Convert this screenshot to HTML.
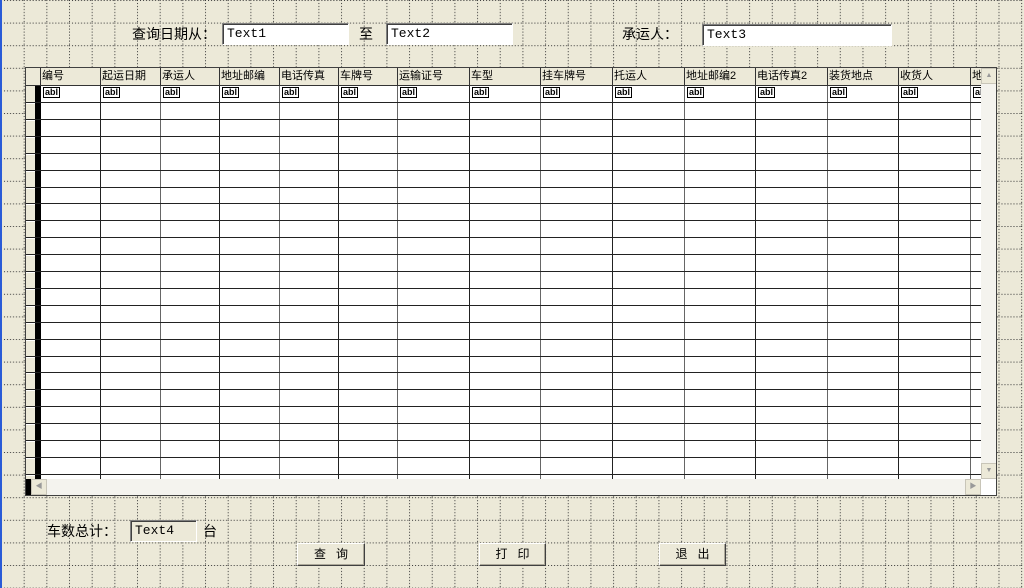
<!DOCTYPE html>
<html><head><meta charset="utf-8"><style>
*{margin:0;padding:0;box-sizing:border-box}
body{width:1024px;height:588px;overflow:hidden;background:#ECE9D8;position:relative;font-family:"Liberation Sans","Noto Sans CJK SC","WenQuanYi Zen Hei",sans-serif}
#bg{position:absolute;left:0;top:0}
.blue{position:absolute;left:0;top:0;width:2px;height:588px;background:#2a5bd7}
.lbl{position:absolute;font-size:14px;color:#000;white-space:nowrap}
.tb{position:absolute;background:#fff;border-top:1px solid #808080;border-left:1px solid #808080;border-right:1px solid #fff;border-bottom:1px solid #fff;box-shadow:inset 1px 1px 0 #404040;font-family:"Liberation Mono",monospace;font-size:13px;padding:2px 0 0 4px;color:#000}
.btn{position:absolute;background:#ECE9D8;border:1px solid;border-color:#fff #404040 #404040 #fff;box-shadow:inset -1px -1px 0 #aca899;font-size:12px;text-align:center;line-height:20px;letter-spacing:10px;padding-left:10px}
#grid{position:absolute;left:25px;top:67px;width:972px;height:429px;background:#ECE9D8;border:1px solid #404040;overflow:hidden}
.hd{position:absolute;top:0;height:18px;font-size:11px;line-height:16px;padding-left:1px;border-right:1px solid #333;border-bottom:1px solid #333;background:#ECE9D8;white-space:nowrap;overflow:hidden}
.cell{position:absolute;background:#fff}
.ab{position:absolute;font-size:9px;font-weight:bold;line-height:9px;height:11px;border:1px solid #000;padding:0 1px;background:#fff;font-family:"Liberation Sans",sans-serif}
</style></head><body>
<svg id="bg" width="1024" height="588"><defs><pattern id="p" width="22.67" height="22.6" patternUnits="userSpaceOnUse" x="1" y="0"><g fill="#333"><rect x="0" y="0" width="1" height="1"/><rect x="3" y="0" width="1" height="1"/><rect x="6" y="0" width="1" height="1"/><rect x="9" y="0" width="1" height="1"/><rect x="12" y="0" width="1" height="1"/><rect x="15" y="0" width="1" height="1"/><rect x="18" y="0" width="1" height="1"/><rect x="21" y="0" width="1" height="1"/><rect x="0" y="3" width="1" height="1"/><rect x="0" y="6" width="1" height="1"/><rect x="0" y="9" width="1" height="1"/><rect x="0" y="12" width="1" height="1"/><rect x="0" y="15" width="1" height="1"/><rect x="0" y="18" width="1" height="1"/><rect x="0" y="21" width="1" height="1"/></g></pattern></defs><rect width="1024" height="588" fill="url(#p)"/></svg>
<div class="blue"></div>
<div class="lbl" style="left:132px;top:24px">查询日期从：</div>
<div class="tb" style="left:222px;top:23px;width:127px;height:22px">Text1</div>
<div class="lbl" style="left:359px;top:24px">至</div>
<div class="tb" style="left:386px;top:23px;width:127px;height:22px">Text2</div>
<div class="lbl" style="left:622px;top:24px">承运人：</div>
<div class="tb" style="left:702px;top:24px;width:190px;height:22px">Text3</div>
<div id="grid"></div>
<div class="lbl" style="left:47px;top:521px">车数总计：</div>
<div class="tb" style="left:130px;top:520px;width:67px;height:22px;background:#ECE9D8">Text4</div>
<div class="lbl" style="left:203px;top:521px">台</div>
<div class="btn" style="left:297px;top:543px;width:68px;height:23px">查询</div>
<div class="btn" style="left:479px;top:543px;width:67px;height:23px">打印</div>
<div class="btn" style="left:659px;top:543px;width:67px;height:23px">退出</div>
<script>
var g=document.getElementById('grid');
var cols=[15,75,135,194,254,313,372,444,515,587,659,730,802,873,945,990];
var names=['编号','起运日期','承运人','地址邮编','电话传真','车牌号','运输证号','车型','挂车牌号','托运人','地址邮编2','电话传真2','装货地点','收货人','地'];
var h='';
// white cell area
h+='<div class="cell" style="left:15px;top:18px;width:940px;height:393px"></div>';
// row selector column
h+='<div style="position:absolute;left:0;top:0;width:15px;height:18px;border-right:1px solid #333;border-bottom:1px solid #333;background:#ECE9D8"></div>';
h+='<div style="position:absolute;left:9px;top:18px;width:6px;height:393px;background:#000"></div>';
for(var i=0;i<names.length;i++){var w=cols[i+1]-cols[i];h+='<div class="hd" style="left:'+cols[i]+'px;width:'+w+'px">'+names[i]+'</div>';h+='<div class="ab" style="left:'+(cols[i]+2)+'px;top:19px">abl</div>';}
// vertical lines
for(var i=1;i<cols.length-1;i++){h+='<div style="position:absolute;left:'+(cols[i]-1)+'px;top:18px;width:1px;height:393px;background:'+(i%2?'#222':'#666')+'"></div>';}
// horizontal lines
for(var y=34;y<411;y+=16.9){h+='<div style="position:absolute;left:0;top:'+Math.round(y)+'px;width:955px;height:1px;background:#222"></div>';h+='<div style="position:absolute;left:0;top:'+(Math.round(y)+1)+'px;width:9px;height:1px;background:#fff"></div>';}
// vertical scrollbar
h+='<div style="position:absolute;left:955px;top:0;width:16px;height:411px;background:#f4f3ee"></div>';
h+='<div style="position:absolute;left:955px;top:0;width:16px;height:16px;background:#ECE9D8;border:1px solid #c8c5b8;font-size:7px;color:#999;text-align:center;line-height:14px">▲</div>';
h+='<div style="position:absolute;left:955px;top:395px;width:16px;height:16px;background:#ECE9D8;border:1px solid #c8c5b8;font-size:7px;color:#999;text-align:center;line-height:14px">▼</div>';
// horizontal scrollbar
h+='<div style="position:absolute;left:0;top:411px;width:955px;height:16px;background:#f4f3ee"></div>';
h+='<div style="position:absolute;left:0;top:411px;width:5px;height:16px;background:#000"></div>';
h+='<div style="position:absolute;left:5px;top:411px;width:16px;height:16px;background:#ECE9D8;border:1px solid #c8c5b8;font-size:7px;color:#999;text-align:center;line-height:14px">◀</div>';
h+='<div style="position:absolute;left:939px;top:411px;width:16px;height:16px;background:#ECE9D8;border:1px solid #c8c5b8;font-size:7px;color:#999;text-align:center;line-height:14px">▶</div>';
h+='<div style="position:absolute;left:955px;top:411px;width:16px;height:16px;background:#fff"></div>';
g.innerHTML=h;
</script>
</body></html>
